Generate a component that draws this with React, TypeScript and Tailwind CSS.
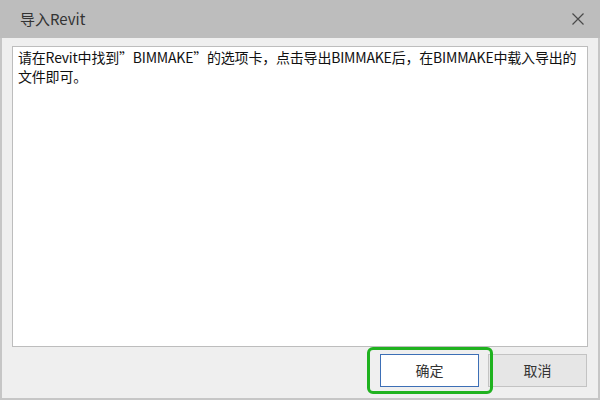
import React from 'react';

const CloseIcon: React.FC = () => (
  <svg width="14" height="14" viewBox="0 0 14 14" fill="none" stroke="#4a4a4a" strokeWidth={1.2}>
    <path d="M1.5 1.5l11 11M12.5 1.5l-11 11" />
  </svg>
);

const App: React.FC = () => {
  const font = { fontFamily: '"Noto Sans CJK SC", "Noto Sans", sans-serif' };

  return (
    <div className="w-[600px] h-[400px] flex flex-col bg-[#efefef] text-[#1a1a1a]" style={font}>
      <div className="h-[38px] bg-[#bdbdbd] flex items-center justify-between pl-[20px] pr-[15px] shrink-0">
        <span className="text-[15px] text-[#333]">导入Revit</span>
        <CloseIcon />
      </div>

      <div className="flex-1 flex flex-col border-x-2 border-b-2 border-[#c6c6c6] pt-[8px] px-[10px] pb-[11px]">
        <div className="flex-1 bg-white border border-[#bdbdbd] px-[5px] pt-[1px] text-[14px] leading-[19px] tracking-[-0.2px] text-[#111]">
          <p className="whitespace-nowrap">请在Revit中找到”BIMMAKE”的选项卡，点击导出BIMMAKE后，在BIMMAKE中载入导出的</p>
          <p>文件即可。</p>
        </div>

        <div className="flex justify-end gap-[9px] pt-[7px] pr-[1px]">
          <div className="relative">
            <button className="w-[99px] h-[33px] bg-white border border-[#3d6fb6] text-[14px] text-[#333]">
              确定
            </button>
            <div className="absolute left-[-13px] top-[-7px] w-[126px] h-[47px] border-[3px] border-[#1fb21f] rounded-[6px] pointer-events-none" />
          </div>
          <button className="w-[99px] h-[33px] bg-[#e6e6e6] border border-[#c3c3c3] text-[14px] text-[#333]">
            取消
          </button>
        </div>
      </div>
    </div>
  );
};

export default App;
